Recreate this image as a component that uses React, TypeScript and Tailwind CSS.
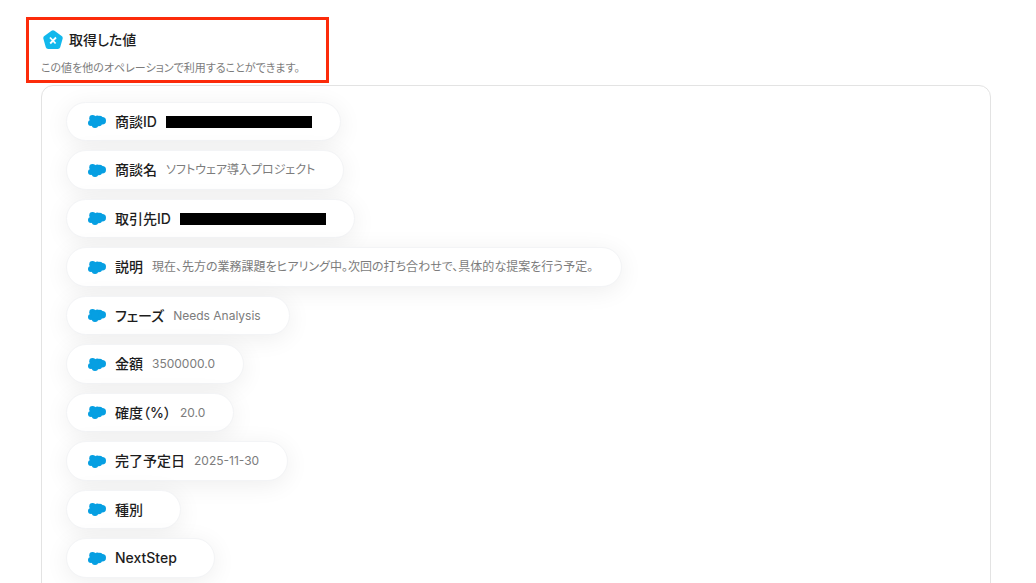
interface IField {
  label: string
  value?: string
  masked?: boolean
}

const fields: IField[] = [
  { label: '商談ID', masked: true },
  { label: '商談名', value: 'ソフトウェア導入プロジェクト' },
  { label: '取引先ID', masked: true },
  {
    label: '説明',
    value:
      '現在、先方の業務課題をヒアリング中。次回の打ち合わせで、具体的な提案を行う予定。',
  },
  { label: 'フェーズ', value: 'Needs Analysis' },
  { label: '金額', value: '3500000.0' },
  { label: '確度（%）', value: '20.0' },
  { label: '完了予定日', value: '2025-11-30' },
  { label: '種別' },
  { label: 'NextStep' },
]

const CloudIcon = () => (
  <svg viewBox="0 0 36 26" className="w-[18px] h-[13px] shrink-0" fill="#069fe2">
    <circle cx="9" cy="6.5" r="6.5" />
    <circle cx="18.5" cy="7" r="5.8" />
    <circle cx="23.5" cy="7.5" r="6" />
    <circle cx="28.5" cy="11.3" r="7.5" />
    <circle cx="6" cy="16" r="6" />
    <circle cx="14" cy="19.5" r="6.5" />
    <circle cx="21.500" cy="16" r="6.5" />
    <circle cx="14" cy="12" r="8" />
  </svg>
)

const VariableIcon = () => (
  <svg viewBox="0 0 20 20" className="size-5 shrink-0">
    <path
      d="M10 2.800 17.200 8 14.800 16.500H5.200L2.800 8Z"
      fill="#12b8ec"
      stroke="#12b8ec"
      strokeWidth="5"
      strokeLinejoin="round"
    />
    <path
      d="M7 7.500 12.600 13.500M13 7.500 7.200 13.500"
      stroke="#fff"
      strokeWidth="1.800"
    />
  </svg>
)

const FieldPill = ({ field }: { field: IField }) => {
  return (
    <li className="flex items-center gap-[9px] rounded-full border border-gray-100 bg-white pl-[21px] pr-7 shadow-[0_4px_24px_rgba(0,0,0,0.07)]">
      <CloudIcon />
      <span className="text-sm font-medium text-[#1d1d1d]">{field.label}</span>
      {field.masked ? (
        <span className="w-[146px] h-3 bg-black" />
      ) : (
        <span className="text-xs text-[#7c7c7c]">{field.value}</span>
      )}
    </li>
  )
}

export default function App() {
  return (
    <main className="min-h-screen bg-white pl-[26px] pr-[45px] pt-[17px] pb-6 font-['Inter','Noto_Sans_CJK_JP',sans-serif] [font-feature-settings:'palt']">
      <header className="w-fit border-3 border-[#fc2b0a] pl-3 pr-[26px] pt-1.5 pb-0.5">
        <div className="flex items-center gap-1.5 h-7 pl-0.5">
          <VariableIcon />
          <h1 className="text-sm font-medium text-[#1d1d1d]">取得した値</h1>
        </div>
        <p className="mt-1 text-[11px] leading-5 text-[#7c7c7c]">
          この値を他のオペレーションで利用することができます。
        </p>
      </header>
      <section className="ml-[15px] mt-0.5 rounded-xl border border-[#e3e3e3] px-6 pt-4 pb-6">
        <ul className="grid justify-items-start auto-rows-[39px_40px] gap-[9px]">
          {fields.map((field) => (
            <FieldPill key={field.label} field={field} />
          ))}
        </ul>
      </section>
    </main>
  )
}
